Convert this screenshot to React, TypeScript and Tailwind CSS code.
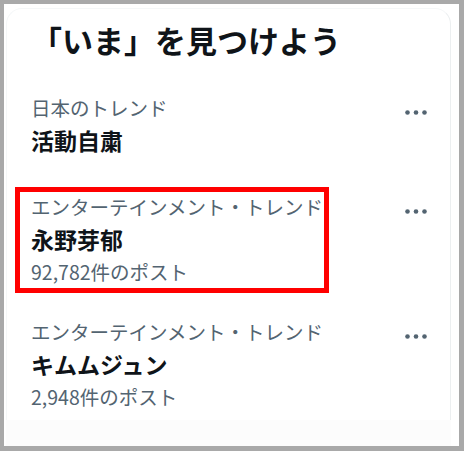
const trends = [
  { category: '日本のトレンド', name: '活動自粛', count: null, highlight: false },
  { category: 'エンターテインメント・トレンド', name: '永野芽郁', count: '92,782件のポスト', highlight: true },
  { category: 'エンターテインメント・トレンド', name: 'キムムジュン', count: '2,948件のポスト', highlight: false },
];

function MoreIcon() {
  return (
    <svg width="22" height="5" viewBox="0 0 22 5" className="mt-[14px] shrink-0">
      <circle cx="2.5" cy="2.5" r="2.3" fill="#536471" />
      <circle cx="11" cy="2.5" r="2.3" fill="#536471" />
      <circle cx="19.5" cy="2.5" r="2.3" fill="#536471" />
    </svg>
  );
}

export default function App() {
  return (
    <div
      className="w-[464px] h-[451px] bg-[#a9a9a9] pt-1 pl-1 pr-[5px] pb-[5px]"
      style={{ fontFamily: '"Noto Sans CJK JP", "Noto Sans", sans-serif' }}
    >
      <div className="h-full bg-white flex flex-col pl-[2px] pr-[8px] pt-[4px]">
        <div className="h-[412px] rounded-t-2xl border border-b-0 border-[#f5f7f8] border-r-[#eceff0] overflow-hidden">
          <div className="pl-6 pt-[9px] pb-4">
            <h2 className="text-[31px] leading-[44px] font-bold text-[#0f1419]">「いま」を見つけよう</h2>
          </div>
          {trends.map((t) => (
            <div key={t.name} className="flex justify-between items-start pl-6 pr-[23px] pt-[18px] pb-[17px]">
              <div className="relative">
                {t.highlight && (
                  <div className="absolute left-[-16px] top-[-8px] w-[314px] h-[106px] border-[5px] border-[#ff0000]" />
                )}
                <div className="text-[19.5px] leading-[24px] text-[#536471]">{t.category}</div>
                <div className="text-[23px] leading-[40px] font-bold text-[#0f1419]">{t.name}</div>
                {t.count && (
                  <div className="text-[19.5px] leading-[26px] text-[#536471]">{t.count}</div>
                )}
              </div>
              <MoreIcon />
            </div>
          ))}
        </div>
        <div className="flex-1 bg-[#fcfcfc]" />
      </div>
    </div>
  );
}
